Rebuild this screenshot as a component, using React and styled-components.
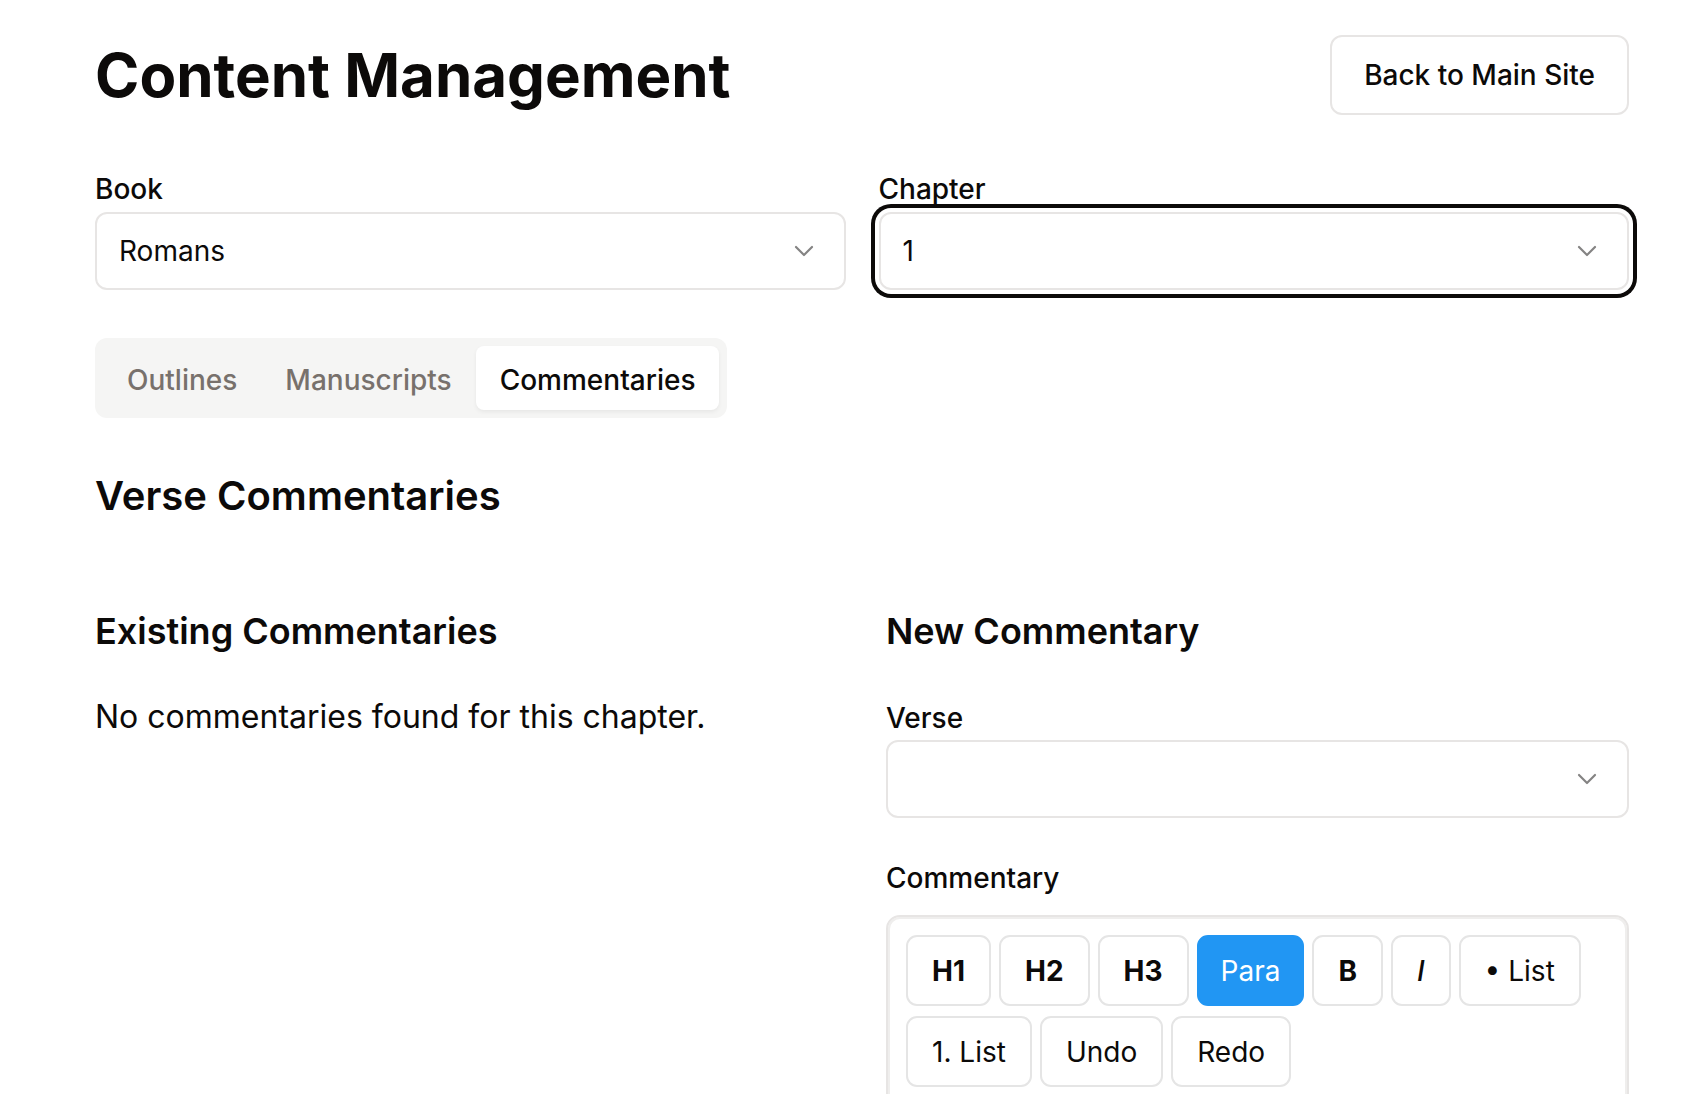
import React from "react";
import styled, { createGlobalStyle, css } from "styled-components";
import { ChevronDown } from "lucide-react";

const GlobalStyle = createGlobalStyle`
  body {
    margin: 0;
    background: #ffffff;
    color: #0c0a09;
    font-family: Inter, "Noto Sans", "Liberation Sans", sans-serif;
  }
  * {
    box-sizing: border-box;
  }
`;

const Page = styled.div`
  padding: 35px 59px 0 95px;
`;

const Header = styled.header`
  display: flex;
  align-items: center;
  justify-content: space-between;
  height: 80px;
`;

const Title = styled.h1`
  margin: 0;
  font-size: 60px;
  line-height: 72px;
  font-weight: 700;
`;

const OutlineButton = styled.button`
  height: 80px;
  padding: 0 32px;
  border: 2px solid #e7e5e4;
  border-radius: 12px;
  background: #ffffff;
  color: #0c0a09;
  font-family: inherit;
  font-size: 28px;
  font-weight: 500;
`;

const SelectorGrid = styled.div`
  display: grid;
  grid-template-columns: 1fr 1fr;
  column-gap: 33px;
  margin-top: 60px;
`;

const Field = styled.div`
  display: flex;
  flex-direction: column;
  margin-top: ${(p) => p.$top || 0}px;
`;

const Label = styled.label`
  font-size: 28px;
  line-height: 28px;
  font-weight: 500;
  margin-bottom: ${(p) => p.$gap || 9}px;
`;

const SelectBox = styled.div`
  display: flex;
  align-items: center;
  justify-content: space-between;
  height: 78px;
  padding: 0 24px 0 22px;
  border: 2px solid #e7e5e4;
  border-radius: 12px;
  background: #ffffff;
  font-size: 28px;
  color: #0c0a09;

  svg {
    opacity: 0.5;
    flex-shrink: 0;
  }

  ${(p) =>
    p.$focused &&
    css`
      box-shadow: 0 0 0 4px #ffffff, 0 0 0 8px #0c0a09;
    `}
`;

const TabsList = styled.div`
  display: inline-flex;
  align-items: center;
  height: 80px;
  padding: 8px;
  margin-top: 48px;
  border-radius: 12px;
  background: #f5f5f4;
`;

const TabTrigger = styled.div`
  display: flex;
  align-items: center;
  height: 64px;
  padding: 4px 24px 0;
  border-radius: 8px;
  font-size: 28px;
  font-weight: 500;
  color: ${(p) => (p.$active ? "#0c0a09" : "#78716c")};
  background: ${(p) => (p.$active ? "#ffffff" : "transparent")};
  box-shadow: ${(p) => (p.$active ? "0 2px 4px rgba(0,0,0,0.06)" : "none")};
`;

const SectionTitle = styled.h2`
  margin: 50px 0 0;
  font-size: 40px;
  line-height: 56px;
  font-weight: 600;
`;

const ColumnGrid = styled.div`
  display: grid;
  grid-template-columns: 1fr 1fr;
  column-gap: 48px;
  margin-top: 79px;
`;

const Column = styled.section`
  display: flex;
  flex-direction: column;
`;

const ColumnTitle = styled.h3`
  margin: 0;
  font-size: 36px;
  line-height: 56px;
  font-weight: 600;
`;

const EmptyText = styled.p`
  margin: 34px 0 0;
  font-size: 32px;
  line-height: 48px;
`;

const Editor = styled.div`
  border: 2px solid #e7e5e4;
  box-shadow: inset 0 0 0 2px #efeeed;
  border-radius: 14px;
  padding: 18px;
  min-height: 400px;
`;

const Toolbar = styled.div`
  display: flex;
  flex-wrap: wrap;
  gap: 10px 8px;
  max-width: 700px;
`;

const ToolButton = styled.button`
  height: 71px;
  padding: 0 ${(p) => (p.$active ? 22 : 24)}px;
  border: 2px solid ${(p) => (p.$active ? "#2196f3" : "#e5e5e5")};
  border-radius: 11px;
  background: ${(p) => (p.$active ? "#2196f3" : "#ffffff")};
  color: ${(p) => (p.$active ? "#ffffff" : "#0c0a09")};
  font-family: inherit;
  font-size: 28px;
  font-weight: ${(p) => p.$weight || 400};
  font-style: ${(p) => (p.$italic ? "italic" : "normal")};
`;

const tools = [
  { label: "H1", weight: 700 },
  { label: "H2", weight: 700 },
  { label: "H3", weight: 700 },
  { label: "Para", active: true },
  { label: "B", weight: 700 },
  { label: "I", italic: true, weight: 500 },
  { label: "• List" },
  { label: "1. List" },
  { label: "Undo" },
  { label: "Redo" },
];

function Select({ value, focused }) {
  return (
    <SelectBox $focused={focused}>
      <span>{value}</span>
      <ChevronDown size={32} strokeWidth={1.6} />
    </SelectBox>
  );
}

export default function App() {
  return (
    <Page>
      <GlobalStyle />
      <Header>
        <Title>Content Management</Title>
        <OutlineButton>Back to Main Site</OutlineButton>
      </Header>

      <SelectorGrid>
        <Field>
          <Label>Book</Label>
          <Select value="Romans" />
        </Field>
        <Field>
          <Label>Chapter</Label>
          <Select value="1" focused />
        </Field>
      </SelectorGrid>

      <TabsList>
        <TabTrigger>Outlines</TabTrigger>
        <TabTrigger>Manuscripts</TabTrigger>
        <TabTrigger $active>Commentaries</TabTrigger>
      </TabsList>

      <SectionTitle>Verse Commentaries</SectionTitle>

      <ColumnGrid>
        <Column>
          <ColumnTitle>Existing Commentaries</ColumnTitle>
          <EmptyText>No commentaries found for this chapter.</EmptyText>
        </Column>
        <Column>
          <ColumnTitle>New Commentary</ColumnTitle>
          <Field $top={45}>
            <Label $gap={8}>Verse</Label>
            <Select value="" />
          </Field>
          <Field $top={46}>
            <Label $gap={23}>Commentary</Label>
            <Editor>
              <Toolbar>
                {tools.map((t) => (
                  <ToolButton
                    key={t.label}
                    $active={t.active}
                    $weight={t.weight}
                    $italic={t.italic}
                  >
                    {t.label}
                  </ToolButton>
                ))}
              </Toolbar>
            </Editor>
          </Field>
        </Column>
      </ColumnGrid>
    </Page>
  );
}
